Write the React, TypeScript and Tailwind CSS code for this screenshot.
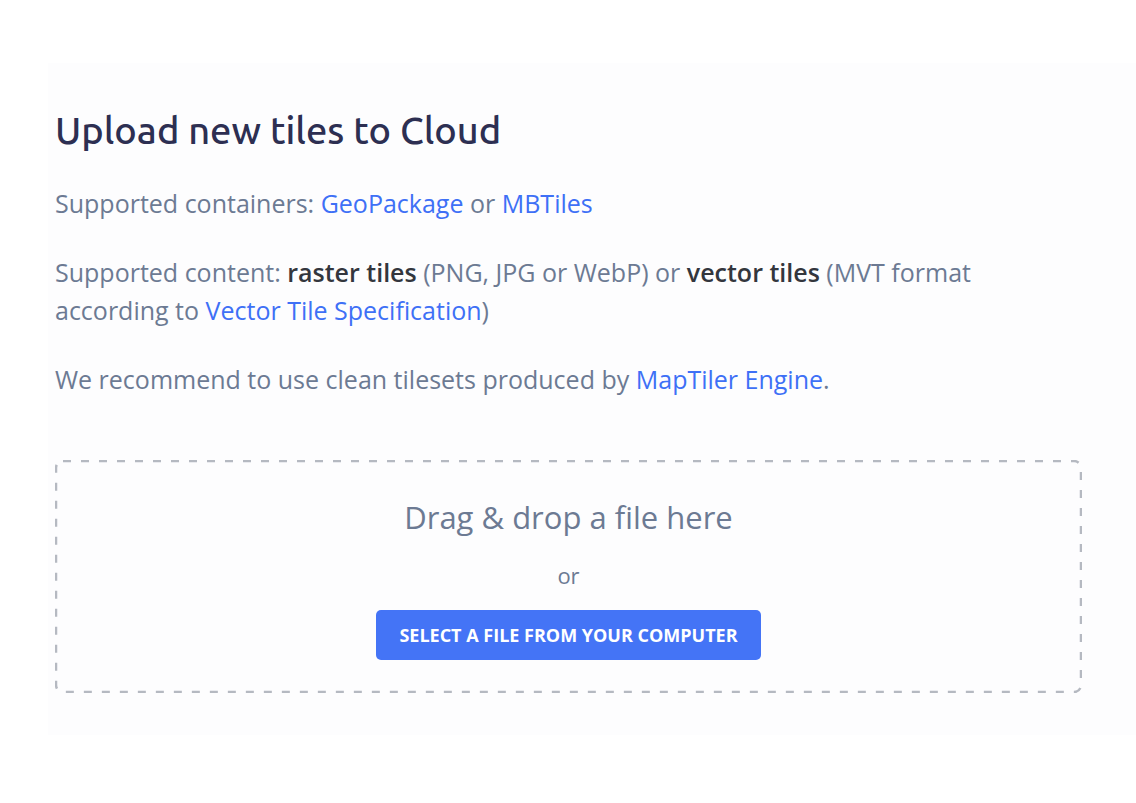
export default function App() {
  const link = "text-[#3e70f6] hover:underline";

  return (
    <div className="h-[803px] overflow-hidden bg-white pt-[63px] pl-[48px] font-['Open_Sans',sans-serif]">
      <section className="h-[672px] bg-[#fdfdfe] pl-[7px] pt-[43px]">
        {/* Title */}
        <h1 className="text-[38px] leading-[48px] font-medium text-[#2d2f52] font-['Ubuntu','Lato',sans-serif]">
          Upload new tiles to Cloud
        </h1>

        <div className="mt-[30px] text-[25px] leading-[38px] text-[#6c7a93] flex flex-col gap-[31px]">
          <p>
            Supported containers: <a className={link}>GeoPackage</a> or{" "}
            <a className={link}>MBTiles</a>
          </p>
          <p>
            Supported content: <b className="font-semibold text-[#33363d]">raster tiles</b> (PNG, JPG or
            WebP) or <b className="font-semibold text-[#33363d]">vector tiles</b> (MVT format
            <br />
            according to <a className={link}>Vector Tile Specification</a>)
          </p>
          <p>
            We recommend to use clean tilesets produced by{" "}
            <a className={link}>MapTiler Engine</a>.
          </p>
        </div>

        {/* Drop zone */}
        <div className="relative mt-[62px] w-[1027px] h-[233px] flex flex-col items-center pt-[38px]">
          <svg className="pointer-events-none absolute inset-0" width="1027" height="233">
            <rect
              x="1"
              y="1"
              width="1025"
              height="231"
              rx="7"
              fill="none"
              stroke="#b5b9c1"
              strokeWidth="2.5"
              strokeDasharray="8 10"
            />
          </svg>
          <div className="text-[31px] leading-[38px] text-[#6c7a93]">Drag &amp; drop a file here</div>
          <div className="mt-[24px] text-[22px] leading-[30px] text-[#6c7a93]">or</div>
          <button className="mt-[20px] h-[50px] w-[385px] rounded-[5px] bg-[#4474f6] text-white text-[18px] font-bold">
            SELECT A FILE FROM YOUR COMPUTER
          </button>
        </div>
      </section>
    </div>
  );
}
